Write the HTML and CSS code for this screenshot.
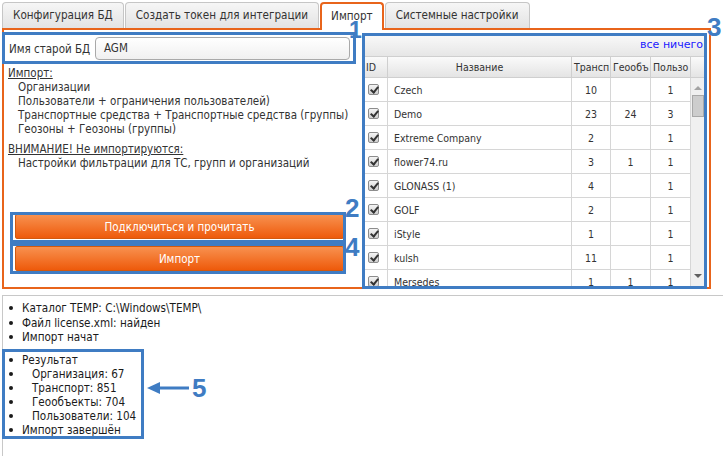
FILE: index.html
```html
<!DOCTYPE html>
<html lang="ru">
<head>
<meta charset="utf-8">
<title>Импорт</title>
<link rel="stylesheet" href="styles.css">
</head>
<body>
<div class="app">
  <div class="tabs">
    <div class="tab">Конфигурация БД</div>
    <div class="tab">Создать токен для интеграции</div>
    <div class="tab active">Импорт</div>
    <div class="tab">Системные настройки</div>
  </div>

  <div class="panel">
    <div class="left">
      <div class="form-row">
        <label class="form-label">Имя старой БД</label>
        <div class="input">AGM</div>
      </div>
      <div class="info">
        <div class="info-title">Импорт:</div>
        <div class="info-item">Организации</div>
        <div class="info-item">Пользователи + ограничения пользователей)</div>
        <div class="info-item">Транспортные средства + Транспортные средства (группы)</div>
        <div class="info-item">Геозоны + Геозоны (группы)</div>
        <div class="info-title warn">ВНИМАНИЕ! Не импортируются:</div>
        <div class="info-item">Настройки фильтрации для ТС, групп и организаций</div>
      </div>
      <div class="buttons">
        <button class="btn">Подключиться и прочитать</button>
        <button class="btn">Импорт</button>
      </div>
    </div>

    <div class="grid">
      <div class="grid-toolbar"><span class="link">все</span> <span class="link">ничего</span></div>
      <div class="grid-head">
        <div class="hcell"><span class="htext">ID</span></div>
        <div class="hcell center"><span class="htext">Название</span></div>
        <div class="hcell"><span class="htext">Трансп</span></div>
        <div class="hcell"><span class="htext">Геообъ</span></div>
        <div class="hcell"><span class="htext">Пользо</span></div>
        <div class="hcell last"></div>
      </div>
      <div class="grid-body">
        <div class="rows">
          <div class="row"><div class="cell"><span class="cb"></span></div><div class="cell name">Czech</div><div class="cell num">10</div><div class="cell num"></div><div class="cell num">1</div></div>
          <div class="row"><div class="cell"><span class="cb"></span></div><div class="cell name">Demo</div><div class="cell num">23</div><div class="cell num">24</div><div class="cell num">3</div></div>
          <div class="row"><div class="cell"><span class="cb"></span></div><div class="cell name">Extreme Company</div><div class="cell num">2</div><div class="cell num"></div><div class="cell num">1</div></div>
          <div class="row"><div class="cell"><span class="cb"></span></div><div class="cell name">flower74.ru</div><div class="cell num">3</div><div class="cell num">1</div><div class="cell num">1</div></div>
          <div class="row"><div class="cell"><span class="cb"></span></div><div class="cell name">GLONASS (1)</div><div class="cell num">4</div><div class="cell num"></div><div class="cell num">1</div></div>
          <div class="row"><div class="cell"><span class="cb"></span></div><div class="cell name">GOLF</div><div class="cell num">2</div><div class="cell num"></div><div class="cell num">1</div></div>
          <div class="row"><div class="cell"><span class="cb"></span></div><div class="cell name">iStyle</div><div class="cell num">1</div><div class="cell num"></div><div class="cell num">1</div></div>
          <div class="row"><div class="cell"><span class="cb"></span></div><div class="cell name">kulsh</div><div class="cell num">11</div><div class="cell num"></div><div class="cell num">1</div></div>
          <div class="row"><div class="cell"><span class="cb"></span></div><div class="cell name">Mersedes</div><div class="cell num">1</div><div class="cell num">1</div><div class="cell num">1</div></div>
        </div>
        <div class="vscroll">
          <span class="arrow up"></span>
          <span class="thumb"></span>
          <span class="track"></span>
          <span class="arrow down"></span>
        </div>
      </div>
    </div>
  </div>

  <div class="log">
    <ul class="log-list">
      <li>Каталог TEMP: C:\Windows\TEMP\</li>
      <li>Файл license.xml: найден</li>
      <li>Импорт начат</li>
    </ul>
    <ul class="log-list result">
      <li>Результат</li>
      <li class="sub">Организация: 67</li>
      <li class="sub">Транспорт: 851</li>
      <li class="sub">Геообъекты: 704</li>
      <li class="sub">Пользователи: 104</li>
      <li>Импорт завершён</li>
    </ul>
  </div>

  <!-- annotation overlays -->
  <div class="mark box1"></div>
  <div class="mark box2"></div>
  <div class="mark box4"></div>
  <div class="mark box3"></div>
  <div class="mark box5"></div>
  <span class="num-label n1">1</span>
  <span class="num-label n2">2</span>
  <span class="num-label n3">3</span>
  <span class="num-label n4">4</span>
  <span class="num-label n5">5</span>
  <svg class="arrow5" width="44" height="14" viewBox="0 0 44 14">
    <path d="M8 7 H42" stroke="#3f7cc3" stroke-width="3"/>
    <path d="M0 7 L13 1 L13 13 Z" fill="#3f7cc3"/>
  </svg>
</div>
</body>
</html>
```

FILE: styles.css
```css
* { box-sizing: border-box; }

html, body {
  margin: 0;
  padding: 0;
  background: #ffffff;
}

.app {
  position: relative;
  width: 723px;
  height: 456px;
  overflow: hidden;
  font-family: "DejaVu Sans Condensed", "DejaVu Sans", sans-serif;
  font-stretch: condensed;
  color: #333333;
}

/* Tabs */
.tabs {
  display: flex;
  align-items: flex-end;
  gap: 1px;
  padding: 2px 0 0 2px;
  height: 28px;
  position: relative;
  z-index: 2;
}

.tab {
  height: 26px;
  padding: 0 10px;
  font-size: 11.6px;
  line-height: 25px;
  color: #333;
  border: 1px solid #c6c6c6;
  border-bottom: none;
  border-radius: 4px 4px 0 0;
  background: linear-gradient(#f6f6f6, #e3e3e3);
  white-space: nowrap;
}

.tab.active {
  height: 28px;
  margin-bottom: -2px;
  background: #ffffff;
  border: 2px solid #e8641b;
  border-bottom: none;
  padding: 0 9px;
  line-height: 25px;
}

/* Panel */
.panel {
  display: flex;
  margin-left: 2px;
  width: 709px;
  height: 261px;
  border: 2px solid #e8641b;
  padding: 0 3px 0 0;
}

.left {
  width: 359px;
  display: flex;
  flex-direction: column;
  padding-left: 2px;
}

.form-row {
  display: flex;
  align-items: center;
  margin-top: 7px;
  height: 23px;
}

.form-label {
  font-size: 11.5px;
  padding-left: 3px;
  width: 89px;
  color: #333;
  white-space: nowrap;
}

.input {
  width: 255px;
  height: 23px;
  border: 1px solid #a9a9a9;
  border-radius: 4px;
  background: linear-gradient(#ffffff, #f0f0f0);
  font-size: 11.5px;
  line-height: 21px;
  padding-left: 8px;
  color: #333;
}

.info {
  margin-top: 6px;
  font-size: 11.5px;
  line-height: 14px;
  padding-left: 2px;
}

.info-title {
  text-decoration: underline;
}

.info-title.warn {
  margin-top: 6px;
}

.info-item {
  padding-left: 10px;
  white-space: nowrap;
}

.buttons {
  margin-top: auto;
  margin-left: 9px;
  margin-bottom: 16px;
  display: flex;
  flex-direction: column;
  gap: 7px;
  width: 329px;
}

.btn {
  height: 25px;
  border: 1px solid #d2590f;
  border-radius: 2px;
  background: linear-gradient(#f8914f, #ee5a0b);
  color: #ffffff;
  font-family: "DejaVu Sans Condensed", "DejaVu Sans", sans-serif;
  font-stretch: condensed;
  font-size: 11.5px;
  padding: 0;
}

/* Grid */
.grid {
  margin-top: 4px;
  width: 343px;
  height: 253px;
  border: 1px solid #bdbdbd;
  display: flex;
  flex-direction: column;
  overflow: hidden;
  font-size: 10.5px;
}

.grid-toolbar {
  height: 21px;
  background: linear-gradient(#f9f9f9, #e6e6e6);
  text-align: right;
  padding-right: 2px;
  line-height: 20px;
  font-family: "DejaVu Sans", sans-serif;
  font-stretch: normal;
  font-size: 11px;
}

.link {
  color: #1a1aff;
}

.grid-head {
  display: grid;
  grid-template-columns: 24px 184px 39px 40px 40px 14px;
  height: 22px;
  border-top: 1px solid #cfcfcf;
  border-bottom: 1px solid #cfcfcf;
  background: linear-gradient(#fafafa, #e4e4e4);
}

.hcell {
  border-right: 1px solid #cfcfcf;
  line-height: 20px;
  padding-left: 2px;
  overflow: hidden;
  white-space: nowrap;
  font-size: 10.5px;
}

.hcell.center {
  text-align: center;
  padding-left: 0;
}

.hcell.last {
  border-right: none;
}

.grid-body {
  display: flex;
  flex: 1;
  min-height: 0;
}

.rows {
  width: 327px;
  display: flex;
  flex-direction: column;
}

.row {
  display: grid;
  grid-template-columns: 24px 184px 39px 40px 40px;
  height: 24px;
  flex: none;
  border-bottom: 1px solid #d6d6d6;
}

.cell {
  border-right: 1px solid #d6d6d6;
  display: flex;
  align-items: center;
  padding-left: 4px;
  font-size: 10.5px;
  white-space: nowrap;
}

.cell.name {
  padding-left: 6px;
}

.cell.num {
  justify-content: center;
  padding-left: 0;
}

.cb {
  width: 11px;
  height: 11px;
  border: 1px solid #8d8d8d;
  border-radius: 2px;
  background: linear-gradient(#f4f4f4, #cfcfcf);
  position: relative;
}

.cb::after {
  content: "";
  position: absolute;
  left: 3px;
  top: 0px;
  width: 3px;
  height: 6px;
  border-right: 2px solid #333;
  border-bottom: 2px solid #333;
  transform: rotate(40deg);
}

.vscroll {
  width: 14px;
  background: #f0f0f0;
  display: flex;
  flex-direction: column;
  align-items: center;
  padding-top: 8px;
}

.arrow {
  width: 0;
  height: 0;
  border-left: 4px solid transparent;
  border-right: 4px solid transparent;
  flex: none;
}

.arrow.up {
  border-bottom: 4px solid #a3a3a3;
}

.arrow.down {
  border-top: 4px solid #606060;
  margin-bottom: 8px;
}

.thumb {
  width: 12px;
  height: 22px;
  margin-top: 5px;
  background: #cdcdcd;
  border: 1px solid #a8a8a8;
  flex: none;
}

.track {
  flex: 1;
}

/* Log */
.log {
  margin-top: 6px;
  margin-left: 2px;
  height: 170px;
  border-top: 1px solid #c8c8c8;
  border-left: 1px solid #c8c8c8;
  padding-top: 5px;
  font-size: 11.6px;
  line-height: 14.5px;
  color: #1a1a1a;
}

.log-list {
  list-style: none;
  margin: 0;
  padding: 0;
}

.log-list li {
  display: flex;
  align-items: center;
  white-space: pre;
}

.log-list li::before {
  content: "";
  width: 4px;
  height: 4px;
  border-radius: 50%;
  background: #1a1a1a;
  margin-left: 6px;
  margin-right: 9px;
  flex: none;
}

.log-list li.sub::before {
  margin-right: 19px;
}

.log-list.result {
  margin-top: 8px;
  line-height: 14px;
}

/* Annotation overlays */
.mark {
  position: absolute;
  border: 3px solid #3f7cc3;
  z-index: 5;
}

.box1 { left: 2px; top: 32px; width: 354px; height: 32px; }
.box2 { left: 10px; top: 212px; width: 336px; height: 31px; }
.box4 { left: 10px; top: 243px; width: 336px; height: 31px; }
.box3 { left: 362px; top: 33px; width: 345px; height: 256px; }
.box5 { left: 2px; top: 349px; width: 142px; height: 90px; }

.num-label {
  position: absolute;
  z-index: 6;
  font-family: "Liberation Sans", Arial, sans-serif;
  font-weight: bold;
  font-size: 26px;
  line-height: 26px;
  color: #3f7cc3;
}

.n1 { left: 349px; top: 17px; font-size: 23px; }
.n2 { left: 345px; top: 195px; }
.n3 { left: 707px; top: 14px; }
.n4 { left: 345px; top: 234px; }
.n5 { left: 192px; top: 375px; }

.arrow5 {
  position: absolute;
  left: 147px;
  top: 381px;
  z-index: 6;
}
```
